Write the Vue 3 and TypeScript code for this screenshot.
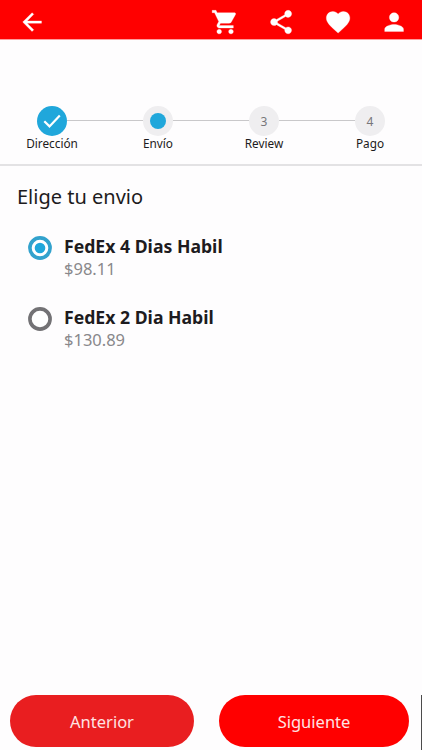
<script setup lang="ts">
import { ref } from 'vue'

interface Step {
  label: string
  state: 'done' | 'current' | 'pending'
}

interface ShippingOption {
  id: string
  name: string
  price: string
}

const actions: { name: string; path: string }[] = [
  {
    name: 'Carrito',
    path: 'M7 18c-1.1 0-1.99.9-1.99 2S5.9 22 7 22s2-.9 2-2-.9-2-2-2zM1 2v2h2l3.6 7.59-1.35 2.45c-.16.28-.25.61-.25.96 0 1.1.9 2 2 2h12v-2H7.42c-.14 0-.25-.11-.25-.25l.03-.12.9-1.63h7.45c.75 0 1.41-.41 1.75-1.03l3.58-6.49c.08-.14.12-.31.12-.48 0-.55-.45-1-1-1H5.21l-.94-2H1zm16 16c-1.1 0-1.99.9-1.99 2s.89 2 1.99 2 2-.9 2-2-.9-2-2-2z',
  },
  {
    name: 'Compartir',
    path: 'M18 16.08c-.76 0-1.44.3-1.96.77L8.91 12.7c.05-.23.09-.46.09-.7s-.04-.47-.09-.7l7.05-4.11c.54.5 1.25.81 2.04.81 1.66 0 3-1.34 3-3s-1.34-3-3-3-3 1.34-3 3c0 .24.04.47.09.7L8.04 9.81C7.5 9.31 6.79 9 6 9c-1.66 0-3 1.34-3 3s1.34 3 3 3c.79 0 1.5-.31 2.04-.81l7.12 4.16c-.05.21-.08.43-.08.65 0 1.61 1.31 2.92 2.92 2.92s2.92-1.31 2.92-2.92-1.31-2.92-2.92-2.92z',
  },
  {
    name: 'Favoritos',
    path: 'M12 21.35l-1.45-1.32C5.4 15.36 2 12.28 2 8.5 2 5.42 4.42 3 7.5 3c1.74 0 3.41.81 4.5 2.09C13.09 3.81 14.76 3 16.5 3 19.58 3 22 5.42 22 8.5c0 3.78-3.4 6.86-8.55 11.54L12 21.35z',
  },
  {
    name: 'Cuenta',
    path: 'M12 12c2.21 0 4-1.79 4-4s-1.79-4-4-4-4 1.79-4 4 1.79 4 4 4zm0 2c-2.67 0-8 1.34-8 4v2h16v-2c0-2.66-5.33-4-8-4z',
  },
]

const steps: Step[] = [
  { label: 'Dirección', state: 'done' },
  { label: 'Envío', state: 'current' },
  { label: 'Review', state: 'pending' },
  { label: 'Pago', state: 'pending' },
]

const options: ShippingOption[] = [
  { id: 'four-day', name: 'FedEx 4 Dias Habil', price: '$98.11' },
  { id: 'two-day', name: 'FedEx 2 Dia Habil', price: '$130.89' },
]

const selected = ref('four-day')
</script>

<template>
  <div class="screen">
    <header class="bar">
      <button class="icon-btn" aria-label="Volver">
        <svg viewBox="0 0 24 24"><path d="M20 11H7.83l5.59-5.59L12 4l-8 8 8 8 1.41-1.41L7.83 13H20v-2z" /></svg>
      </button>
      <div class="actions">
        <button v-for="a in actions" :key="a.name" class="icon-btn" :aria-label="a.name">
          <svg viewBox="0 0 24 24"><path :d="a.path" /></svg>
        </button>
      </div>
    </header>

    <ol class="steps">
      <li v-for="(s, i) in steps" :key="s.label" class="step">
        <div class="track">
          <span class="line" :class="{ hidden: i === 0 }"></span>
          <span class="dot" :class="s.state">
            <svg v-if="s.state === 'done'" viewBox="0 0 30 30"><path d="M7.3 15.2l5.2 5.2L22.8 9.4" /></svg>
            <i v-else-if="s.state === 'current'"></i>
            <template v-else>{{ i + 1 }}</template>
          </span>
          <span class="line" :class="{ hidden: i === steps.length - 1 }"></span>
        </div>
        <span class="label">{{ s.label }}</span>
      </li>
    </ol>

    <main class="content">
      <h1>Elige tu envio</h1>
      <div class="options" role="radiogroup">
        <div
          v-for="o in options"
          :key="o.id"
          class="option"
          role="radio"
          :aria-checked="selected === o.id"
          @click="selected = o.id"
        >
          <svg class="radio" :class="{ on: selected === o.id }" viewBox="0 0 24 24">
            <circle class="ring" cx="12" cy="12" r="10.1" />
            <circle v-if="selected === o.id" class="core" cx="12" cy="12" r="5.3" />
          </svg>
          <div class="text">
            <span class="name">{{ o.name }}</span>
            <span class="price">{{ o.price }}</span>
          </div>
        </div>
      </div>
    </main>

    <footer class="footer">
      <button class="btn prev">Anterior</button>
      <button class="btn next">Siguiente</button>
      <span class="edge"></span>
    </footer>
  </div>
</template>

<style>
body {
  margin: 0;
  background: #fefdfe;
}
</style>

<style scoped>
.screen {
  box-sizing: border-box;
  width: 100%;
  height: 750px;
  display: flex;
  flex-direction: column;
  overflow: hidden;
  background: #fefdfe;
  color: #1d1b20;
  font-family: 'Noto Sans', sans-serif;
}
button {
  border: 0;
  margin: 0;
  padding: 0;
  font-family: inherit;
}
.bar {
  box-sizing: border-box;
  height: 39px;
  flex: none;
  display: flex;
  justify-content: space-between;
  padding: 8px 14px 0 18px;
  background: #ff0000;
  box-shadow: 0 1px 0 #ff9c9c;
}
.actions {
  display: flex;
  gap: 28px;
}
.icon-btn {
  width: 28.2px;
  height: 28.2px;
  background: none;
}
.icon-btn svg {
  display: block;
  width: 100%;
  height: 100%;
  fill: #fff;
  stroke: #fff;
  stroke-width: 0.25;
}
.steps {
  box-sizing: border-box;
  list-style: none;
  margin: 0 -1px;
  padding: 67px 0 0;
  height: 127px;
  flex: none;
  display: flex;
  border-bottom: 2px solid #e3e2e4;
}
.step {
  flex: 1;
  display: flex;
  flex-direction: column;
  align-items: center;
}
.track {
  width: 100%;
  display: flex;
  align-items: center;
}
.line {
  flex: 1;
  height: 1px;
  margin-top: -1px;
  background: #c9c8ca;
}
.line.hidden {
  visibility: hidden;
}
.dot {
  width: 30px;
  height: 30px;
  border-radius: 50%;
  display: flex;
  align-items: center;
  justify-content: center;
  background: #efeef0;
  color: #77767a;
  font-size: 12px;
}
.dot.done {
  background: #20a7db;
}
.dot svg {
  width: 30px;
  height: 30px;
  fill: none;
  stroke: #fff;
  stroke-width: 2.2;
}
.dot i {
  width: 16px;
  height: 16px;
  border-radius: 50%;
  background: #20a7db;
}
.label {
  margin-top: -1px;
  font-size: 11.8px;
  line-height: 17px;
}
.content {
  flex: 1;
  padding: 17px 17px 0;
}
h1 {
  margin: 0;
  font-size: 20px;
  line-height: 28px;
  font-weight: 400;
}
.options {
  display: flex;
  flex-direction: column;
  gap: 23px;
  padding: 23px 11px 0;
}
.option {
  display: flex;
  gap: 12px;
}
.radio {
  width: 24px;
  height: 24px;
  margin-top: 2px;
}
.ring {
  fill: #fff;
  stroke: #737275;
  stroke-width: 3.6;
}
.on .ring {
  stroke: #32a2cd;
}
.core {
  fill: #20a7db;
}
.text {
  display: flex;
  flex-direction: column;
}
.name {
  font-size: 17.65px;
  line-height: 24px;
  font-weight: 700;
}
.price {
  font-size: 16.5px;
  line-height: 23px;
  margin-top: -1px;
  margin-bottom: 2px;
  color: #89888b;
}
.footer {
  position: relative;
  flex: none;
  height: 55px;
  display: flex;
  gap: 25px;
  padding: 0 13px 0 10px;
}
.btn {
  height: 52px;
  border-radius: 26px;
  color: #ffe3e3;
  font-size: 16.5px;
}
.prev {
  width: 184px;
  background: #e91e20;
}
.next {
  flex: 1;
  background: #ff0000;
}
.edge {
  position: absolute;
  right: 0;
  top: 0;
  width: 1px;
  height: 55px;
  background: #4c4c4c;
}
</style>
